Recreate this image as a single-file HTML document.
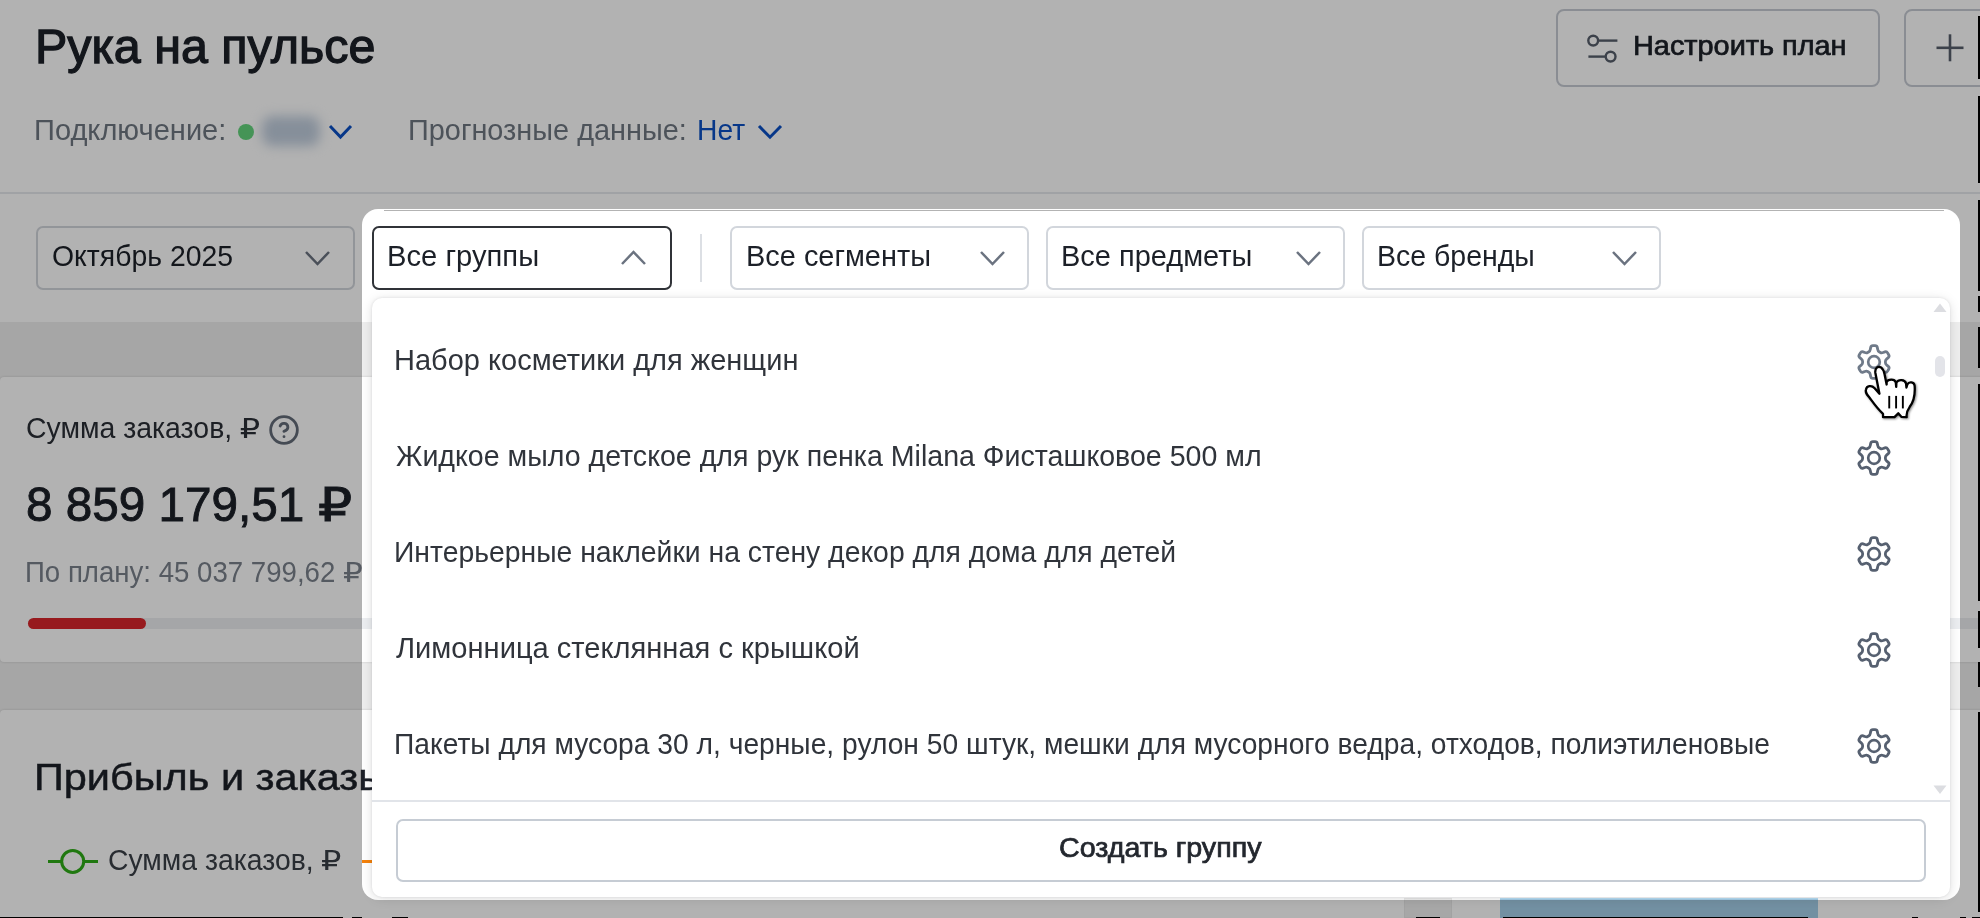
<!DOCTYPE html>
<html lang="ru"><head><meta charset="utf-8"><title>Рука на пульсе</title>
<style>
html,body{margin:0;padding:0;background:#fff}
body{width:1980px;height:918px;overflow:hidden;font-family:"Liberation Sans", "DejaVu Sans", sans-serif}
#page{position:relative;width:1980px;height:918px;overflow:hidden;background:#fff}
.abs{position:absolute;display:block}
.t{position:absolute;white-space:nowrap;line-height:1;transform-origin:0 50%;letter-spacing:0}
.rub{font-family:"DejaVu Sans",sans-serif;font-size:.94em;display:inline-block;transform:scaleX(1.2);transform-origin:0 50%}
.sel{box-sizing:border-box;border:2px solid #d2d6dc;border-radius:7px;background:#fff}
.sel.act{border:2.5px solid #303338}
.btn{box-sizing:border-box;border:2px solid #c6cbd3;border-radius:8px;background:#fff}
.band{background:#eeeeee}
.card{background:#fff;border-radius:4px 0 0 4px}
.blk{background:#000;z-index:60}
#dd{left:372px;top:298px;width:1578px;height:599px;background:#fff;border-radius:10px;box-shadow:0 2px 12px rgba(20,20,25,.13),0 0 3px rgba(20,20,25,.10);z-index:10}
#spot{left:362px;top:209px;width:1598px;height:691px;border-radius:16px;box-shadow:0 0 0 3000px rgba(0,0,0,.3);z-index:20;pointer-events:none}
.z30{z-index:30}
</style></head><body><div id="page">

<!-- header -->
<div class="abs" style="left:0;top:192px;width:1980px;height:1.6px;background:#e6e8ec"></div>
<div class="abs" style="left:237.5px;top:123.5px;width:16.5px;height:16.5px;border-radius:50%;background:#63d47c"></div>
<div class="abs" style="left:262px;top:116px;width:58px;height:30px;border-radius:10px;background:#c0cddd;filter:blur(6px)"></div>
<svg class="abs" style="left:327px;top:123px" width="27" height="17"><polyline points="3,3 13.5,14 24,3" fill="none" stroke="#0b50c4" stroke-width="3" stroke-linecap="butt" stroke-linejoin="miter"/></svg>
<svg class="abs" style="left:756px;top:123px" width="28" height="17.19999999999999"><polyline points="3,3 14.0,14.199999999999989 25,3" fill="none" stroke="#0b50c4" stroke-width="3" stroke-linecap="butt" stroke-linejoin="miter"/></svg>
<div class="abs btn" style="left:1556px;top:8.6px;width:323.6px;height:78.6px"></div>
<div class="abs btn" style="left:1904.4px;top:8.6px;width:120px;height:78.6px"></div>
<svg class="abs" style="left:1580px;top:28px" width="44" height="42" viewBox="0 0 44 42" fill="none" stroke="#565e6b" stroke-width="2.4">
<circle cx="13.2" cy="12.6" r="4.9"/><line x1="18.2" y1="12.6" x2="37.4" y2="12.6"/>
<circle cx="30.6" cy="28.6" r="4.9"/><line x1="8.4" y1="28.6" x2="25.6" y2="28.6"/></svg>
<svg class="abs" style="left:1930px;top:28px" width="40" height="40" viewBox="0 0 40 40" stroke="#565e6b" stroke-width="2.6"><line x1="6.5" y1="19.8" x2="33.5" y2="19.8"/><line x1="20" y1="6.3" x2="20" y2="33.3"/></svg>

<!-- filter row -->
<div class="abs sel" style="left:36px;top:225.8px;width:319.4px;height:64px"></div>
<div class="abs sel act" style="left:371.8px;top:225.8px;width:300.49999999999994px;height:64.4px"></div>
<div class="abs" style="left:700px;top:234px;width:1.6px;height:48px;background:#dcdfe4"></div>
<div class="abs sel" style="left:730.4px;top:225.8px;width:298.80000000000007px;height:64px"></div>
<div class="abs sel" style="left:1046.4px;top:225.8px;width:298.79999999999995px;height:64px"></div>
<div class="abs sel" style="left:1362.4px;top:225.8px;width:298.79999999999995px;height:64px"></div>
<svg class="abs" style="left:303px;top:249px" width="29" height="18"><polyline points="3,3 14.5,15 26,3" fill="none" stroke="#6b7380" stroke-width="2.5" stroke-linecap="butt" stroke-linejoin="miter"/></svg>
<svg class="abs" style="left:619px;top:249px" width="29" height="18"><polyline points="3,15 14.5,3 26,15" fill="none" stroke="#6b7380" stroke-width="2.5" stroke-linecap="butt" stroke-linejoin="miter"/></svg>
<svg class="abs" style="left:977.6px;top:249px" width="29.0" height="18"><polyline points="3,3 14.5,15 26.0,3" fill="none" stroke="#6b7380" stroke-width="2.5" stroke-linecap="butt" stroke-linejoin="miter"/></svg>
<svg class="abs" style="left:1293.6px;top:249px" width="29.0" height="18"><polyline points="3,3 14.5,15 26.0,3" fill="none" stroke="#6b7380" stroke-width="2.5" stroke-linecap="butt" stroke-linejoin="miter"/></svg>
<svg class="abs" style="left:1609.6px;top:249px" width="29.0" height="18"><polyline points="3,3 14.5,15 26.0,3" fill="none" stroke="#6b7380" stroke-width="2.5" stroke-linecap="butt" stroke-linejoin="miter"/></svg>

<!-- bands and cards -->
<div class="abs band" style="left:0;top:322px;width:1980px;height:596px"></div>
<div class="abs card" style="left:0;top:376.5px;width:1990px;height:285px;box-shadow:0 0 2.5px rgba(0,0,0,.16)"></div>
<div class="abs card" style="left:0;top:709.5px;width:1990px;height:300px;box-shadow:0 0 2.5px rgba(0,0,0,.16)"></div>
<svg class="abs" style="left:268px;top:414px" width="32" height="32" viewBox="0 0 24 24" fill="none" stroke="#646c79" stroke-width="2.1" stroke-linecap="round" stroke-linejoin="round"><circle cx="12" cy="12" r="10"/><path d="M9.09 9a3 3 0 0 1 5.83 1c0 2-3 3-3 3"/><path d="M12 17h.01"/></svg>
<div class="abs" style="left:28px;top:618px;width:1960px;height:11.4px;border-radius:6px;background:#eceef1"></div>
<div class="abs" style="left:28px;top:618px;width:118px;height:11.4px;border-radius:6px;background:#d9262b"></div>
<svg class="abs" style="left:44px;top:846px" width="60" height="32" viewBox="0 0 60 32"><line x1="4" y1="15.4" x2="54" y2="15.4" stroke="#2eac17" stroke-width="3"/><circle cx="28.7" cy="15.4" r="11" fill="#fff" stroke="#2eac17" stroke-width="3"/></svg>
<div class="abs" style="left:362.4px;top:860px;width:40px;height:3px;background:#f5820b"></div>
<div class="abs" style="left:1404px;top:898px;width:48px;height:20px;background:#f0f0f0;border:1px solid #e9e9e9;box-sizing:border-box"></div>
<div class="abs" style="left:1500px;top:898px;width:318px;height:20px;background:#a5cfe9;border-top:1.5px solid #b9e0f8;box-sizing:border-box"></div>

<!-- dropdown -->
<div class="abs" id="dd">
<div class="abs" style="left:0;top:501.5px;width:1578px;height:2px;background:#e1e4e9"></div>
<div class="abs btn" style="left:24px;top:520.5px;width:1530px;height:63px;border-color:#c6ccd4;border-radius:7px"></div>
<svg class="abs" style="left:1560px;top:4px" width="16" height="12"><polygon points="1.5,10 8,1.5 14.5,10" fill="#dcdde1"/></svg>
<svg class="abs" style="left:1560px;top:486px" width="16" height="12"><polygon points="1.5,1.5 14.5,1.5 8,10" fill="#dcdde1"/></svg>
<div class="abs" style="left:1562.5px;top:58px;width:10.8px;height:21px;border-radius:5.4px;background:#e3e4e9"></div>
</div>
<div class="z30">
<svg class="abs z30" style="left:1854px;top:341.6px" width="40" height="40" viewBox="0 0 40 40"><path d="M14.92 9.74 Q16.03 9.10 16.33 7.36 L16.67 5.41 Q16.97 3.68 18.91 3.68 L21.09 3.68 Q23.03 3.68 23.33 5.41 L23.67 7.36 Q23.97 9.10 25.08 9.74 L26.34 10.47 Q27.46 11.11 29.11 10.51 L30.97 9.83 Q32.62 9.22 33.59 10.90 L34.68 12.78 Q35.65 14.46 34.30 15.59 L32.78 16.86 Q31.42 17.99 31.42 19.27 L31.42 20.73 Q31.42 22.01 32.78 23.14 L34.30 24.41 Q35.65 25.54 34.68 27.22 L33.59 29.10 Q32.62 30.78 30.97 30.17 L29.11 29.49 Q27.46 28.89 26.34 29.53 L25.08 30.26 Q23.97 30.90 23.67 32.64 L23.33 34.59 Q23.03 36.32 21.09 36.32 L18.91 36.32 Q16.97 36.32 16.67 34.59 L16.33 32.64 Q16.03 30.90 14.92 30.26 L13.66 29.53 Q12.54 28.89 10.89 29.49 L9.03 30.17 Q7.38 30.78 6.41 29.10 L5.32 27.22 Q4.35 25.54 5.70 24.41 L7.22 23.14 Q8.58 22.01 8.58 20.73 L8.58 19.27 Q8.58 17.99 7.22 16.86 L5.70 15.59 Q4.35 14.46 5.32 12.78 L6.41 10.90 Q7.38 9.22 9.03 9.83 L10.89 10.51 Q12.54 11.11 13.66 10.47 Z" fill="none" stroke="#6f7a89" stroke-width="2.8" stroke-linejoin="round"/><circle cx="20" cy="20" r="5.8" fill="none" stroke="#6f7a89" stroke-width="2.7"/></svg>
<svg class="abs z30" style="left:1854px;top:437.8px" width="40" height="40" viewBox="0 0 40 40"><path d="M14.92 9.74 Q16.03 9.10 16.33 7.36 L16.67 5.41 Q16.97 3.68 18.91 3.68 L21.09 3.68 Q23.03 3.68 23.33 5.41 L23.67 7.36 Q23.97 9.10 25.08 9.74 L26.34 10.47 Q27.46 11.11 29.11 10.51 L30.97 9.83 Q32.62 9.22 33.59 10.90 L34.68 12.78 Q35.65 14.46 34.30 15.59 L32.78 16.86 Q31.42 17.99 31.42 19.27 L31.42 20.73 Q31.42 22.01 32.78 23.14 L34.30 24.41 Q35.65 25.54 34.68 27.22 L33.59 29.10 Q32.62 30.78 30.97 30.17 L29.11 29.49 Q27.46 28.89 26.34 29.53 L25.08 30.26 Q23.97 30.90 23.67 32.64 L23.33 34.59 Q23.03 36.32 21.09 36.32 L18.91 36.32 Q16.97 36.32 16.67 34.59 L16.33 32.64 Q16.03 30.90 14.92 30.26 L13.66 29.53 Q12.54 28.89 10.89 29.49 L9.03 30.17 Q7.38 30.78 6.41 29.10 L5.32 27.22 Q4.35 25.54 5.70 24.41 L7.22 23.14 Q8.58 22.01 8.58 20.73 L8.58 19.27 Q8.58 17.99 7.22 16.86 L5.70 15.59 Q4.35 14.46 5.32 12.78 L6.41 10.90 Q7.38 9.22 9.03 9.83 L10.89 10.51 Q12.54 11.11 13.66 10.47 Z" fill="none" stroke="#566070" stroke-width="2.8" stroke-linejoin="round"/><circle cx="20" cy="20" r="5.8" fill="none" stroke="#566070" stroke-width="2.7"/></svg>
<svg class="abs z30" style="left:1854px;top:533.8px" width="40" height="40" viewBox="0 0 40 40"><path d="M14.92 9.74 Q16.03 9.10 16.33 7.36 L16.67 5.41 Q16.97 3.68 18.91 3.68 L21.09 3.68 Q23.03 3.68 23.33 5.41 L23.67 7.36 Q23.97 9.10 25.08 9.74 L26.34 10.47 Q27.46 11.11 29.11 10.51 L30.97 9.83 Q32.62 9.22 33.59 10.90 L34.68 12.78 Q35.65 14.46 34.30 15.59 L32.78 16.86 Q31.42 17.99 31.42 19.27 L31.42 20.73 Q31.42 22.01 32.78 23.14 L34.30 24.41 Q35.65 25.54 34.68 27.22 L33.59 29.10 Q32.62 30.78 30.97 30.17 L29.11 29.49 Q27.46 28.89 26.34 29.53 L25.08 30.26 Q23.97 30.90 23.67 32.64 L23.33 34.59 Q23.03 36.32 21.09 36.32 L18.91 36.32 Q16.97 36.32 16.67 34.59 L16.33 32.64 Q16.03 30.90 14.92 30.26 L13.66 29.53 Q12.54 28.89 10.89 29.49 L9.03 30.17 Q7.38 30.78 6.41 29.10 L5.32 27.22 Q4.35 25.54 5.70 24.41 L7.22 23.14 Q8.58 22.01 8.58 20.73 L8.58 19.27 Q8.58 17.99 7.22 16.86 L5.70 15.59 Q4.35 14.46 5.32 12.78 L6.41 10.90 Q7.38 9.22 9.03 9.83 L10.89 10.51 Q12.54 11.11 13.66 10.47 Z" fill="none" stroke="#566070" stroke-width="2.8" stroke-linejoin="round"/><circle cx="20" cy="20" r="5.8" fill="none" stroke="#566070" stroke-width="2.7"/></svg>
<svg class="abs z30" style="left:1854px;top:630px" width="40" height="40" viewBox="0 0 40 40"><path d="M14.92 9.74 Q16.03 9.10 16.33 7.36 L16.67 5.41 Q16.97 3.68 18.91 3.68 L21.09 3.68 Q23.03 3.68 23.33 5.41 L23.67 7.36 Q23.97 9.10 25.08 9.74 L26.34 10.47 Q27.46 11.11 29.11 10.51 L30.97 9.83 Q32.62 9.22 33.59 10.90 L34.68 12.78 Q35.65 14.46 34.30 15.59 L32.78 16.86 Q31.42 17.99 31.42 19.27 L31.42 20.73 Q31.42 22.01 32.78 23.14 L34.30 24.41 Q35.65 25.54 34.68 27.22 L33.59 29.10 Q32.62 30.78 30.97 30.17 L29.11 29.49 Q27.46 28.89 26.34 29.53 L25.08 30.26 Q23.97 30.90 23.67 32.64 L23.33 34.59 Q23.03 36.32 21.09 36.32 L18.91 36.32 Q16.97 36.32 16.67 34.59 L16.33 32.64 Q16.03 30.90 14.92 30.26 L13.66 29.53 Q12.54 28.89 10.89 29.49 L9.03 30.17 Q7.38 30.78 6.41 29.10 L5.32 27.22 Q4.35 25.54 5.70 24.41 L7.22 23.14 Q8.58 22.01 8.58 20.73 L8.58 19.27 Q8.58 17.99 7.22 16.86 L5.70 15.59 Q4.35 14.46 5.32 12.78 L6.41 10.90 Q7.38 9.22 9.03 9.83 L10.89 10.51 Q12.54 11.11 13.66 10.47 Z" fill="none" stroke="#566070" stroke-width="2.8" stroke-linejoin="round"/><circle cx="20" cy="20" r="5.8" fill="none" stroke="#566070" stroke-width="2.7"/></svg>
<svg class="abs z30" style="left:1854px;top:726.2px" width="40" height="40" viewBox="0 0 40 40"><path d="M14.92 9.74 Q16.03 9.10 16.33 7.36 L16.67 5.41 Q16.97 3.68 18.91 3.68 L21.09 3.68 Q23.03 3.68 23.33 5.41 L23.67 7.36 Q23.97 9.10 25.08 9.74 L26.34 10.47 Q27.46 11.11 29.11 10.51 L30.97 9.83 Q32.62 9.22 33.59 10.90 L34.68 12.78 Q35.65 14.46 34.30 15.59 L32.78 16.86 Q31.42 17.99 31.42 19.27 L31.42 20.73 Q31.42 22.01 32.78 23.14 L34.30 24.41 Q35.65 25.54 34.68 27.22 L33.59 29.10 Q32.62 30.78 30.97 30.17 L29.11 29.49 Q27.46 28.89 26.34 29.53 L25.08 30.26 Q23.97 30.90 23.67 32.64 L23.33 34.59 Q23.03 36.32 21.09 36.32 L18.91 36.32 Q16.97 36.32 16.67 34.59 L16.33 32.64 Q16.03 30.90 14.92 30.26 L13.66 29.53 Q12.54 28.89 10.89 29.49 L9.03 30.17 Q7.38 30.78 6.41 29.10 L5.32 27.22 Q4.35 25.54 5.70 24.41 L7.22 23.14 Q8.58 22.01 8.58 20.73 L8.58 19.27 Q8.58 17.99 7.22 16.86 L5.70 15.59 Q4.35 14.46 5.32 12.78 L6.41 10.90 Q7.38 9.22 9.03 9.83 L10.89 10.51 Q12.54 11.11 13.66 10.47 Z" fill="none" stroke="#566070" stroke-width="2.8" stroke-linejoin="round"/><circle cx="20" cy="20" r="5.8" fill="none" stroke="#566070" stroke-width="2.7"/></svg>
</div>

<div class="abs" id="spot"></div>
<div class="abs" style="left:384px;top:210px;width:1560px;height:1px;background:#b3b3b3;z-index:25"></div>

<div id="texts">
<span class="t" id="t_title" style="left:34.75px;top:22.49px;font-size:48.5px;font-weight:400;-webkit-text-stroke:1.26px #1c2028;color:#1c2028;transform:scaleX(0.9988);">Рука на пульсе</span>
<span class="t" id="t_conn" style="left:33.75px;top:116.15px;font-size:29px;font-weight:400;color:#6f7782;transform:scaleX(1.0022);">Подключение:</span>
<span class="t" id="t_prog" style="left:407.75px;top:116.15px;font-size:29px;font-weight:400;color:#6f7782;transform:scaleX(0.9960);">Прогнозные данные:</span>
<span class="t" id="t_net" style="left:696.75px;top:116.15px;font-size:29px;font-weight:400;color:#0b50c4;transform:scaleX(0.9749);">Нет</span>
<span class="t" id="t_plan" style="left:1633.00px;top:32.02px;font-size:27.8px;font-weight:400;-webkit-text-stroke:0.72px #1c2028;color:#1c2028;transform:scaleX(1.0386);">Настроить план</span>
<span class="t" id="t_f0" style="left:51.75px;top:242.15px;font-size:29px;font-weight:400;color:#1c2028;transform:scaleX(0.9787);">Октябрь 2025</span>
<span class="t" id="t_f1" style="left:386.75px;top:242.15px;font-size:29px;font-weight:400;color:#1c2028;transform:scaleX(1.0063);">Все группы</span>
<span class="t" id="t_f2" style="left:745.75px;top:242.15px;font-size:29px;font-weight:400;color:#1c2028;transform:scaleX(0.9975);">Все сегменты</span>
<span class="t" id="t_f3" style="left:1060.75px;top:242.15px;font-size:29px;font-weight:400;color:#1c2028;transform:scaleX(0.9991);">Все предметы</span>
<span class="t" id="t_f4" style="left:1376.75px;top:242.15px;font-size:29px;font-weight:400;color:#1c2028;transform:scaleX(0.9824);">Все бренды</span>
<span class="t" id="t_sum" style="left:25.50px;top:414.15px;font-size:29px;font-weight:400;color:#2a2e36;transform:scaleX(0.9802);">Сумма заказов, <span class="rub">₽</span></span>
<span class="t" id="t_big" style="left:26.25px;top:480.49px;font-size:48.5px;font-weight:400;-webkit-text-stroke:0.92px #1c2028;color:#1c2028;transform:scaleX(0.9828);">8 859 179,51 <span class="rub">₽</span></span>
<span class="t" id="t_byplan" style="left:24.75px;top:558.15px;font-size:29px;font-weight:400;color:#7a818c;transform:scaleX(0.9523);">По плану: 45 037 799,62 <span class="rub">₽</span></span>
<span class="t" id="t_profit" style="left:34.00px;top:758.81px;font-size:37.5px;font-weight:400;-webkit-text-stroke:0.49px #1c2028;color:#1c2028;transform:scaleX(1.1058);">Прибыль и заказы</span>
<span class="t" id="t_leg" style="left:107.50px;top:845.65px;font-size:29px;font-weight:400;color:#3a3f47;transform:scaleX(0.9776);">Сумма заказов, <span class="rub">₽</span></span>
<span class="t z30" id="t_i0" style="left:393.75px;top:346.15px;font-size:29px;font-weight:400;color:#30343b;transform:scaleX(1.0001);">Набор косметики для женщин</span>
<span class="t z30" id="t_i1" style="left:395.50px;top:442.15px;font-size:29px;font-weight:400;color:#30343b;transform:scaleX(0.9850);">Жидкое мыло детское для рук пенка Milana Фисташковое 500 мл</span>
<span class="t z30" id="t_i2" style="left:393.75px;top:538.15px;font-size:29px;font-weight:400;color:#30343b;transform:scaleX(0.9773);">Интерьерные наклейки на стену декор для дома для детей</span>
<span class="t z30" id="t_i3" style="left:395.75px;top:634.15px;font-size:29px;font-weight:400;color:#30343b;transform:scaleX(1.0030);">Лимонница стеклянная с крышкой</span>
<span class="t z30" id="t_i4" style="left:393.75px;top:730.15px;font-size:29px;font-weight:400;color:#30343b;transform:scaleX(0.9730);">Пакеты для мусора 30 л, черные, рулон 50 штук, мешки для мусорного ведра, отходов, полиэтиленовые</span>
<span class="t z30" id="t_create" style="left:1059.00px;top:834.02px;font-size:27.8px;font-weight:400;-webkit-text-stroke:0.72px #23272e;color:#23272e;transform:scaleX(1.0303);">Создать группу</span>
</div>
<svg class="abs" style="left:1840px;top:330px;z-index:50;filter:drop-shadow(1px 1.5px 1px rgba(0,0,0,.45))" width="100" height="100" viewBox="0 0 100 100"><path d="M25.93 59.69 C26.69 55.56 31.59 55.01 34.64 58.28 L39.43 63.73 L35.40 43.03 C34.64 37.58 38.13 35.73 41.18 37.58 C43.57 39.22 44.12 42.48 44.66 44.66 L46.62 54.47 L46.62 52.07 C47.93 49.02 54.47 48.47 55.77 52.29 L56.21 56.86 L56.43 52.51 C58.28 49.24 64.81 49.24 66.01 53.38 L66.45 57.52 L67.32 54.47 C69.17 51.20 74.07 52.07 74.62 55.56 C75.38 65.36 73.53 71.90 69.72 76.80 C66.99 80.61 66.23 83.88 66.67 87.15 L61.55 86.93 L58.28 83.33 L54.47 87.15 L43.03 87.15 L43.03 83.88 C37.04 78.43 32.68 71.90 29.41 67.54 C26.69 64.27 25.27 62.64 25.93 59.69 Z" fill="#fff" stroke="#000" stroke-width="2.3" stroke-linejoin="round"/><line x1="49.24" y1="65.90" x2="49.24" y2="78.43" stroke="#000" stroke-width="1.9"/><line x1="56.10" y1="65.90" x2="56.10" y2="78.43" stroke="#000" stroke-width="1.9"/><line x1="62.85" y1="65.90" x2="62.85" y2="78.43" stroke="#000" stroke-width="1.9"/></svg>
<div class="abs blk" style="left:1977.7px;top:15.7px;width:3px;height:63.8px"></div>
<div class="abs blk" style="left:1977.7px;top:96px;width:3px;height:87px"></div>
<div class="abs blk" style="left:1977.7px;top:200px;width:3px;height:91px"></div>
<div class="abs blk" style="left:1977.7px;top:296px;width:3px;height:16px"></div>
<div class="abs blk" style="left:1977.7px;top:327px;width:3px;height:41px"></div>
<div class="abs blk" style="left:1977.7px;top:384px;width:3px;height:217px"></div>
<div class="abs blk" style="left:1977.7px;top:611px;width:3px;height:37px"></div>
<div class="abs blk" style="left:1977.7px;top:662px;width:3px;height:25px"></div>
<div class="abs blk" style="left:1977.7px;top:712px;width:3px;height:200px"></div>
<div class="abs blk" style="left:0px;top:916.6px;width:343px;height:2px"></div>
<div class="abs blk" style="left:352px;top:916.6px;width:10px;height:2px"></div>
<div class="abs blk" style="left:392px;top:916.6px;width:16px;height:2px"></div>
<div class="abs blk" style="left:1416px;top:916.6px;width:24px;height:2px"></div>
<div class="abs blk" style="left:1503px;top:916.6px;width:305px;height:2px"></div>
<div class="abs blk" style="left:1912px;top:916.6px;width:6px;height:2px"></div>
<div class="abs blk" style="left:1960px;top:916.6px;width:6px;height:2px"></div>
<div class="abs blk" style="left:1972px;top:916.6px;width:8px;height:2px"></div>
</div></body></html>
